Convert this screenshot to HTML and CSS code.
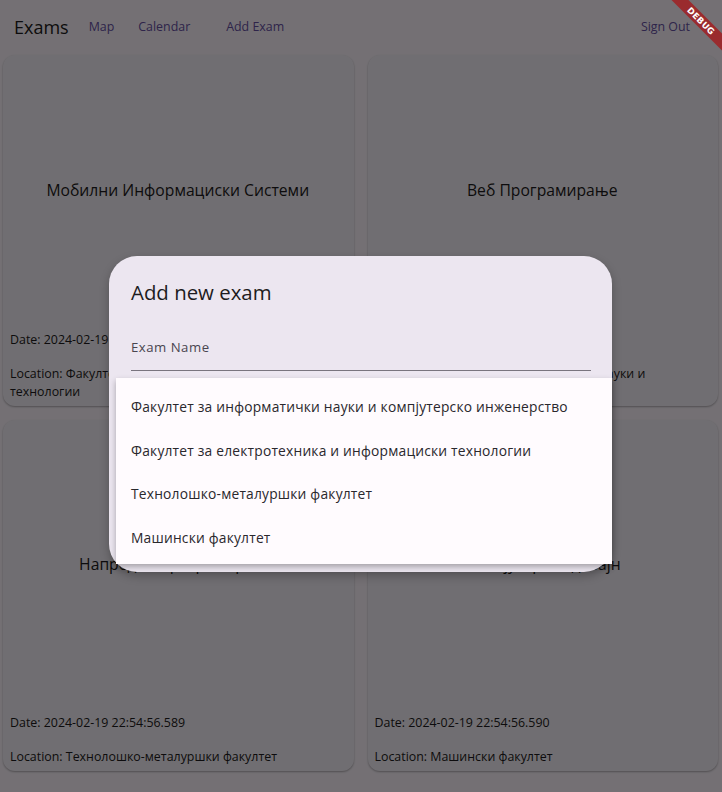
FILE: index.html
```html
<!DOCTYPE html>
<html lang="mk">
<head>
<meta charset="utf-8">
<title>Exams</title>
<link rel="stylesheet" href="styles.css">
</head>
<body>
<div class="app">
  <header class="appbar">
    <span class="brand">Exams</span>
    <a class="nav nav-map">Map</a>
    <a class="nav nav-cal">Calendar</a>
    <a class="nav nav-add">Add Exam</a>
    <a class="nav nav-out">Sign Out</a>
  </header>
  <main class="grid">
    <section class="card">
      <div class="card-title">Мобилни Информациски Системи</div>
      <div class="card-date">Date: 2024-02-19 22:54:56.588</div>
      <div class="card-loc">Location: Факултет за електротехника и информациски технологии</div>
    </section>
    <section class="card">
      <div class="card-title">Веб Програмирање</div>
      <div class="card-date">Date: 2024-02-19 22:54:56.588</div>
      <div class="card-loc">Location: Факултет за информатички науки и компјутерско инженерство</div>
    </section>
    <section class="card">
      <div class="card-title">Напредно програмирање</div>
      <div class="card-date">Date: 2024-02-19 22:54:56.589</div>
      <div class="card-loc">Location: Технолошко-металуршки факултет</div>
    </section>
    <section class="card">
      <div class="card-title">Компјутерски дизајн</div>
      <div class="card-date">Date: 2024-02-19 22:54:56.590</div>
      <div class="card-loc">Location: Машински факултет</div>
    </section>
  </main>
</div>
<div class="scrim"></div>
<div class="dialog">
  <h2 class="dialog-title">Add new exam</h2>
  <div class="field">
    <span class="field-label">Exam Name</span>
  </div>
</div>
<ul class="menu">
  <li class="menu-item">Факултет за информатички науки и компјутерско инженерство</li>
  <li class="menu-item">Факултет за електротехника и информациски технологии</li>
  <li class="menu-item">Технолошко-металуршки факултет</li>
  <li class="menu-item">Машински факултет</li>
</ul>
<div class="debug">DEBUG</div>
</body>
</html>
```

FILE: styles.css
```css
html, body {
  margin: 0;
  padding: 0;
}
body {
  width: 722px;
  height: 792px;
  overflow: hidden;
  position: relative;
  background: #fef7ff;
  font-family: "Open Sans", "Noto Sans", sans-serif;
  color: #1d1b20;
}
.app {
  display: flex;
  flex-direction: column;
}
.appbar {
  height: 55px;
  display: flex;
  align-items: center;
  padding-left: 14px;
  padding-right: 32px;
  padding-bottom: 2px;
  box-sizing: border-box;
}
.brand {
  font-size: 18px;
  font-weight: 400;
  color: #1d1b20;
}
.nav {
  font-size: 12.4px;
  color: #6750a4;
  font-weight: 500;
}
.nav-map { margin-left: 20px; }
.nav-cal { margin-left: 24px; }
.nav-add { margin-left: 36px; }
.nav-out { margin-left: auto; }

.grid {
  display: grid;
  grid-template-columns: 1fr 1fr;
  column-gap: 14px;
  row-gap: 14px;
  padding: 0 4px 0 3px;
}
.card {
  height: 351px;
  box-sizing: border-box;
  background: #f7f2fa;
  border-radius: 12px;
  box-shadow: 0 1px 2px rgba(0, 0, 0, 0.3);
  display: flex;
  flex-direction: column;
  padding: 0 8px 5px 7px;
}
.card-title {
  flex: 1;
  display: flex;
  align-items: center;
  justify-content: center;
  text-align: center;
  font-size: 15.7px;
  padding-bottom: 4px;
}
.card-date,
.card-loc {
  font-size: 12.4px;
  line-height: 18px;
}
.card-date {
  margin-top: 3px;
}
.card-loc {
  margin-top: 16px;
}

.scrim {
  position: absolute;
  inset: 0;
  background: rgba(0, 0, 0, 0.545);
}

.dialog {
  position: absolute;
  left: 109px;
  top: 256px;
  width: 503px;
  height: 316px;
  box-sizing: border-box;
  background: #ece6f0;
  border-radius: 28px;
  padding: 22px 21px 0 22px;
  box-shadow: 0 4px 10px rgba(0, 0, 0, 0.25);
}
.dialog-title {
  margin: 0;
  font-size: 20.4px;
  line-height: 28px;
  font-weight: 400;
  color: #1d1b20;
}
.field {
  margin-top: 31px;
  padding-bottom: 13px;
  border-bottom: 1px solid #79747e;
}
.field-label {
  display: block;
  font-size: 13.2px;
  line-height: 20px;
  letter-spacing: 0.5px;
  color: #49454f;
}

.menu {
  position: absolute;
  left: 116px;
  top: 378px;
  width: 496px;
  height: 186px;
  box-sizing: border-box;
  margin: 0;
  padding: 7px 0 5px 0;
  list-style: none;
  background: #fffbfe;
  box-shadow: 0 3px 6px rgba(0, 0, 0, 0.3);
}
.menu-item {
  height: 43.5px;
  display: flex;
  align-items: center;
  padding-left: 15px;
  font-size: 13.8px;
  letter-spacing: 0.2px;
  color: #2a282d;
}

.debug {
  position: absolute;
  left: 641px;
  top: 15px;
  width: 120px;
  height: 12px;
  line-height: 12px;
  background: #9a2b2e;
  color: #ffffff;
  font-family: "DejaVu Sans", sans-serif;
  font-size: 8.5px;
  font-weight: 700;
  text-align: center;
  letter-spacing: 0.3px;
  transform: rotate(45deg);
}
```
